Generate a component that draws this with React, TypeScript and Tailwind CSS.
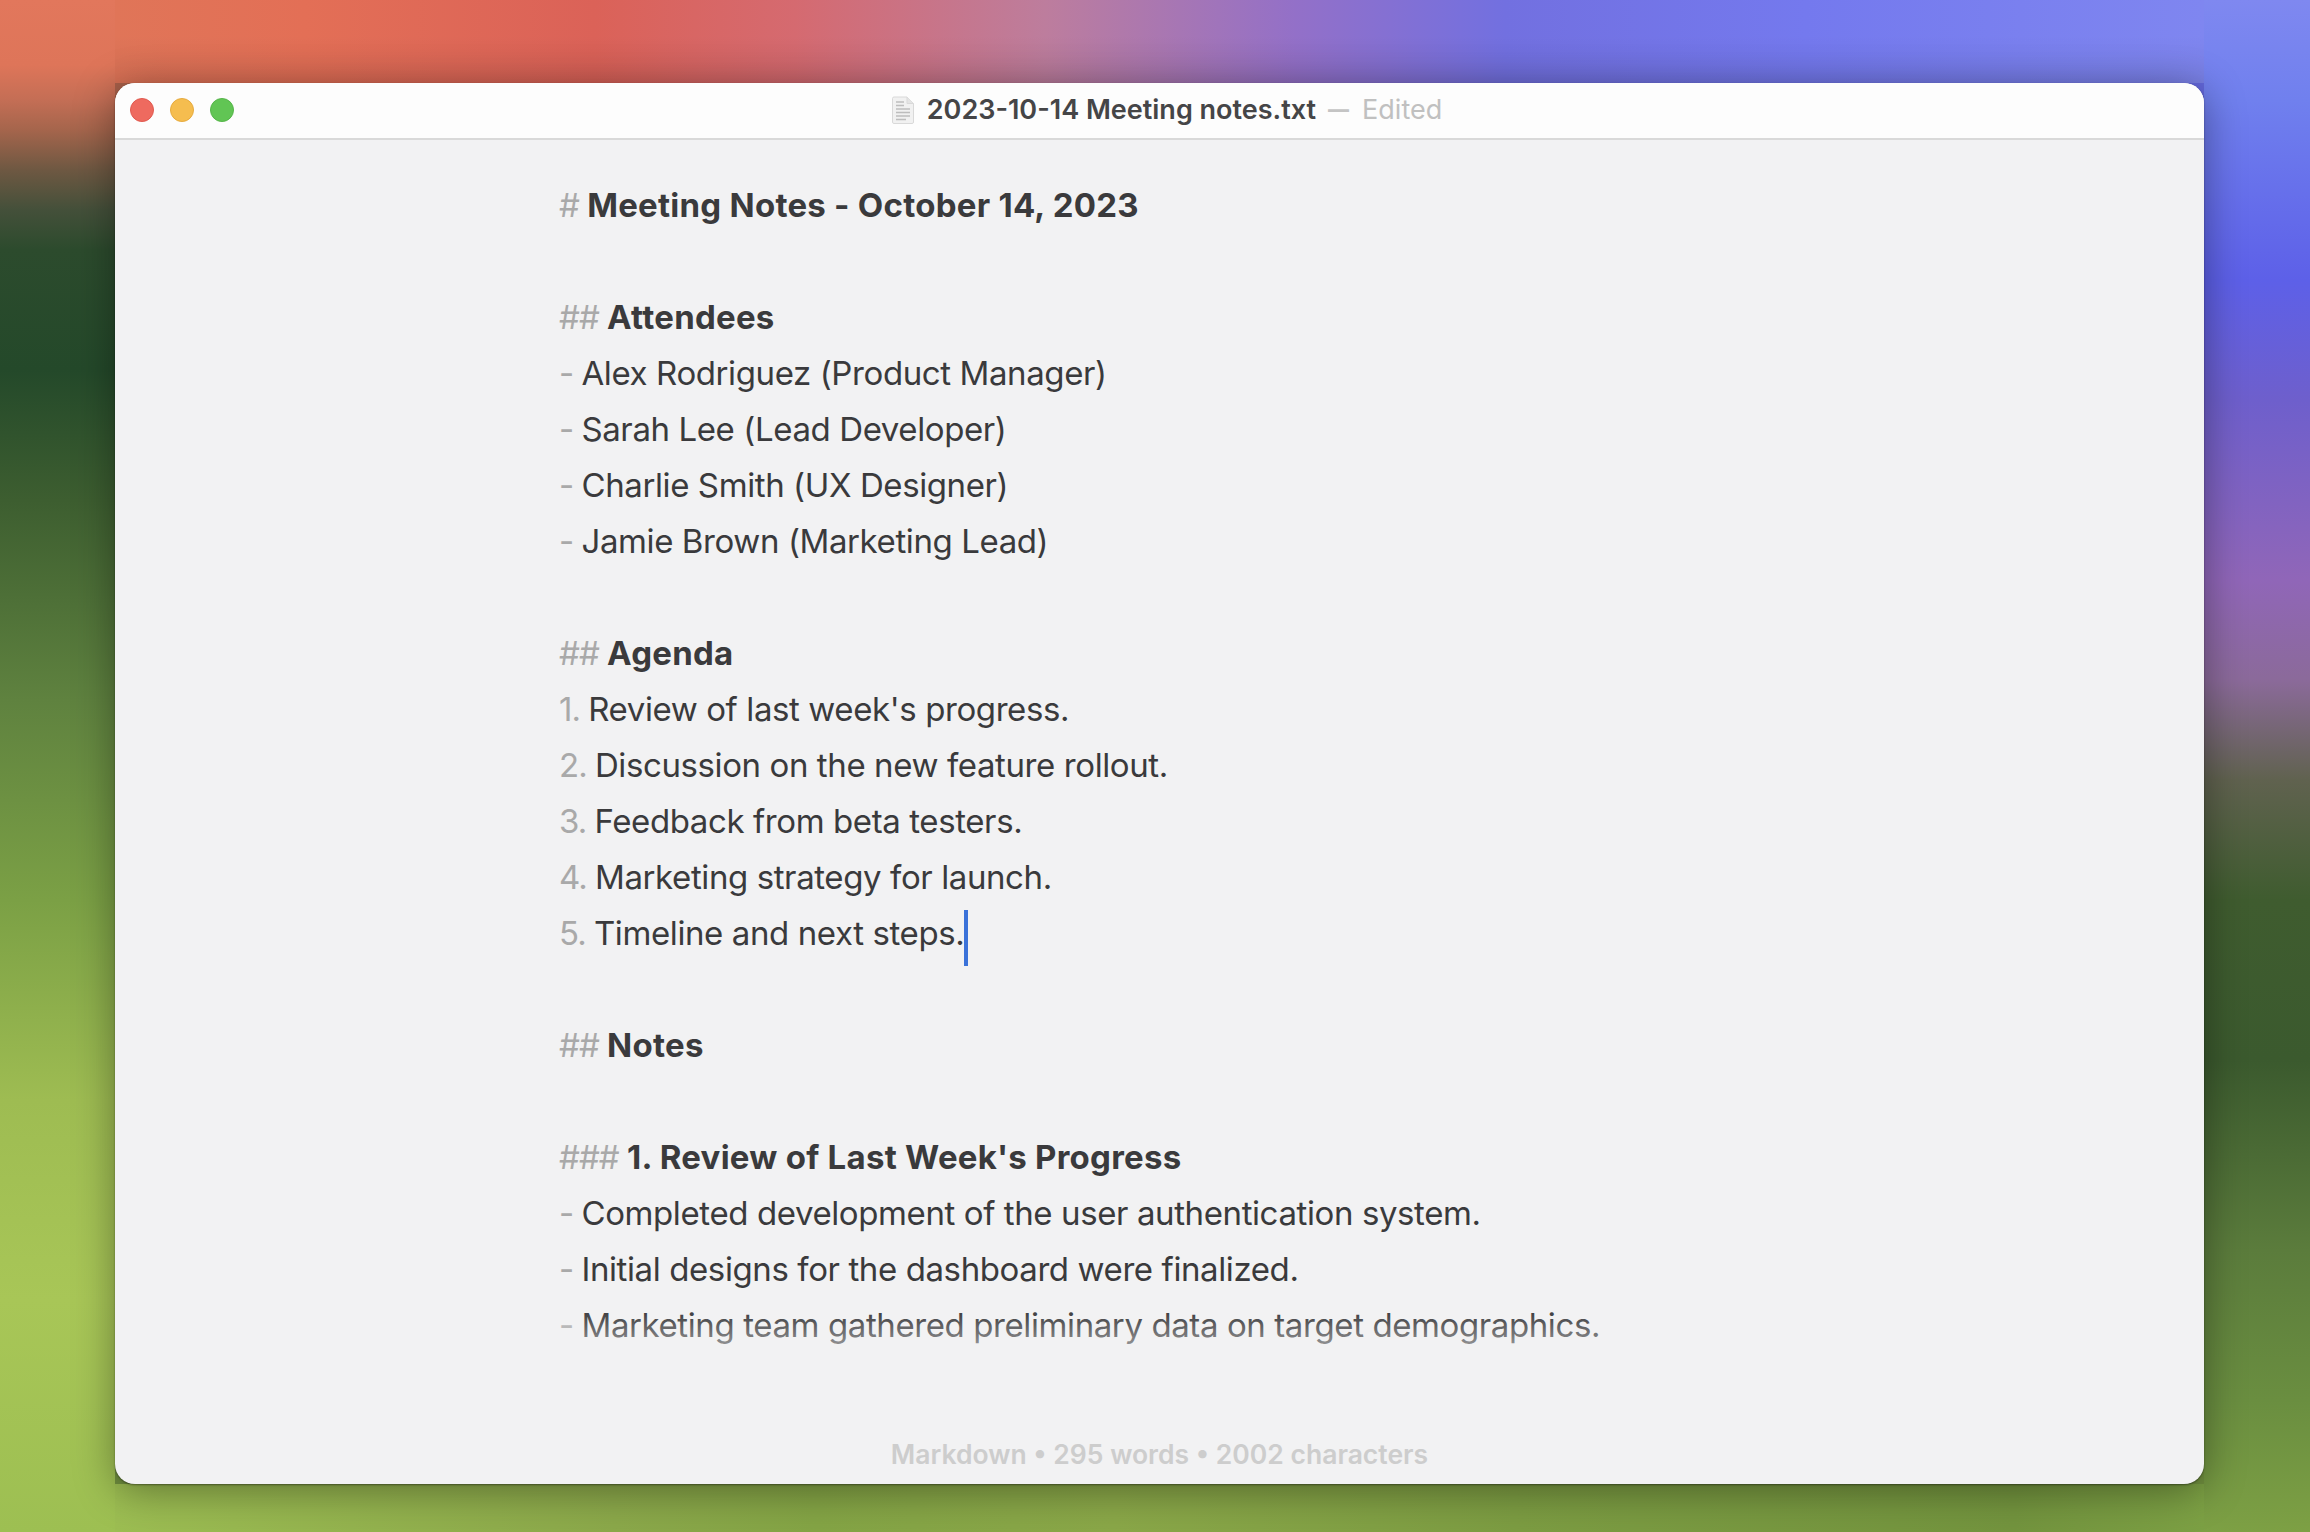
const LINES: { mark?: string; text?: string; bold?: boolean; caret?: boolean }[] = [
  { mark: '#', text: 'Meeting Notes - October 14, 2023', bold: true },
  {},
  { mark: '##', text: 'Attendees', bold: true },
  { mark: '-', text: 'Alex Rodriguez (Product Manager)' },
  { mark: '-', text: 'Sarah Lee (Lead Developer)' },
  { mark: '-', text: 'Charlie Smith (UX Designer)' },
  { mark: '-', text: 'Jamie Brown (Marketing Lead)' },
  {},
  { mark: '##', text: 'Agenda', bold: true },
  { mark: '1.', text: "Review of last week's progress." },
  { mark: '2.', text: 'Discussion on the new feature rollout.' },
  { mark: '3.', text: 'Feedback from beta testers.' },
  { mark: '4.', text: 'Marketing strategy for launch.' },
  { mark: '5.', text: 'Timeline and next steps.', caret: true },
  {},
  { mark: '##', text: 'Notes', bold: true },
  {},
  { mark: '###', text: "1. Review of Last Week's Progress", bold: true },
  { mark: '-', text: 'Completed development of the user authentication system.' },
  { mark: '-', text: 'Initial designs for the dashboard were finalized.' },
  { mark: '-', text: 'Marketing team gathered preliminary data on target demographics.' },
];

function DocIcon() {
  return (
    <svg width="24" height="29" viewBox="0 0 24 29" fill="none">
      <path d="M1.5 2.5a1.5 1.5 0 0 1 1.5-1.5h13l6.5 6.5v18.5a1.5 1.5 0 0 1-1.5 1.5h-18a1.500 1.500 0 0 1-1.500-1.500z" fill="#f1f1f1" stroke="#d9d9d9" />
      <path d="M16 1v6.500h6.500" fill="#e4e4e4" stroke="#d9d9d9" />
      <path d="M5 6h8M5 9.500h8M5 13h14M5 16.500h14M5 20h14M5 23.500h10" stroke="#bdbdbd" strokeWidth="1.600" />
    </svg>
  );
}

export default function App() {
  return (
    <div className="grid h-[1532px] w-[2310px] grid-cols-[115px_2089px_106px] grid-rows-[83px_1401px_48px] overflow-hidden font-['Inter','Liberation_Sans',sans-serif]">
      <div className="row-span-3 bg-[linear-gradient(180deg,#e2775c_0px,#de7559_65px,#c46e55_100px,#a5654c_130px,#6e5842_170px,#44503a_210px,#2c4b2d_250px,#24492a_370px,#3d5e30_500px,#5f823f_700px,#7ba045_900px,#9ebc52_1100px,#a8c657_1300px,#9dbf52_1532px)]" />
      <div className="bg-[linear-gradient(180deg,rgba(0,0,0,0)_35px,rgba(0,0,0,0.06)_83px),linear-gradient(90deg,#e07558_0px,#e36f56_190px,#db6258_480px,#d56a70_680px,#bd7d9d_930px,#9370c8_1180px,#7270e0_1390px,#7479ee_1690px,#7f86f0_2089px)]" />
      <div className="row-span-3 bg-[linear-gradient(180deg,#7f88f0_0px,#7080ee_100px,#5d60e8_280px,#6e5fcc_400px,#9066b8_580px,#8b6a9a_680px,#60624f_780px,#3f5c2f_900px,#3b5a2e_1060px,#5b7c3c_1250px,#6a8e40_1400px,#7da044_1532px)]" />

      <div className="relative z-10 bg-[linear-gradient(180deg,rgba(0,0,0,0)_50%,#71903f_50%),linear-gradient(90deg,#a8604a_50%,#6468dc_50%)]">
        <div className="flex h-full flex-col overflow-hidden rounded-[20px] bg-[#f2f2f3] text-[#3a3a3c] shadow-[0_1px_2px_rgba(0,0,0,0.4),0_6px_40px_rgba(0,0,0,0.38)]">
          <div className="grid h-[57px] shrink-0 grid-cols-[1fr_auto_1fr] items-center border-b-2 border-[#d9d9d9] bg-[#fdfdfd] pb-[1px]">
            <div className="flex items-center gap-[16px] pl-[15px]">
              <span className="h-[24px] w-[24px] rounded-full border border-[#e05a50] bg-[#ee6a5f]" />
              <span className="h-[24px] w-[24px] rounded-full border border-[#e6ab3f] bg-[#f5bd4f]" />
              <span className="h-[24px] w-[24px] rounded-full border border-[#56b54a] bg-[#61c554]" />
            </div>
            <div className="flex items-center pl-[14px] text-[27px]">
              <DocIcon />
              <span className="ml-[12px] font-semibold text-[#454547]">2023-10-14 Meeting notes.txt</span>
              <span className="ml-[12px] text-[21px] font-extrabold text-[#c4c4c4]">—</span>
              <span className="ml-[13px] text-[#c0c0c0]">Edited</span>
            </div>
            <div />
          </div>

          <div className="relative flex-1 overflow-hidden pl-[444px] pt-[38px] text-[33px]">
            {LINES.map((line, i) => (
              <div key={i} className="flex h-[56px] items-center whitespace-pre">
                {line.mark && <span className="tracking-[-1px] text-[#a9a9a9]">{line.mark} </span>}
                {line.text && <span className={line.bold ? 'font-bold tracking-[0.25px]' : 'tracking-[-0.4px]'}>{line.text}</span>}
                {line.caret && <span className="mt-[7px] h-[56px] w-[4px] bg-[#3b72d9]" />}
              </div>
            ))}
            <div className="absolute inset-x-0 bottom-0 h-[116px] bg-[linear-gradient(180deg,rgba(242,242,243,0)_0px,rgba(242,242,243,0.4)_30px,#f2f2f3_70px)]" />
          </div>

          <div className="flex h-[58px] shrink-0 items-center justify-center text-[26.5px] font-semibold text-[#cdcdcd]">
            Markdown • 295 words • 2002 characters
          </div>
        </div>
      </div>

      <div className="bg-[linear-gradient(90deg,#9cbd52_0px,#8ba84a_500px,#84a445_700px,#8aa748_1000px,#7c9c42_1400px,#73943e_1900px,#7ca044_2089px)]" />
    </div>
  );
}
